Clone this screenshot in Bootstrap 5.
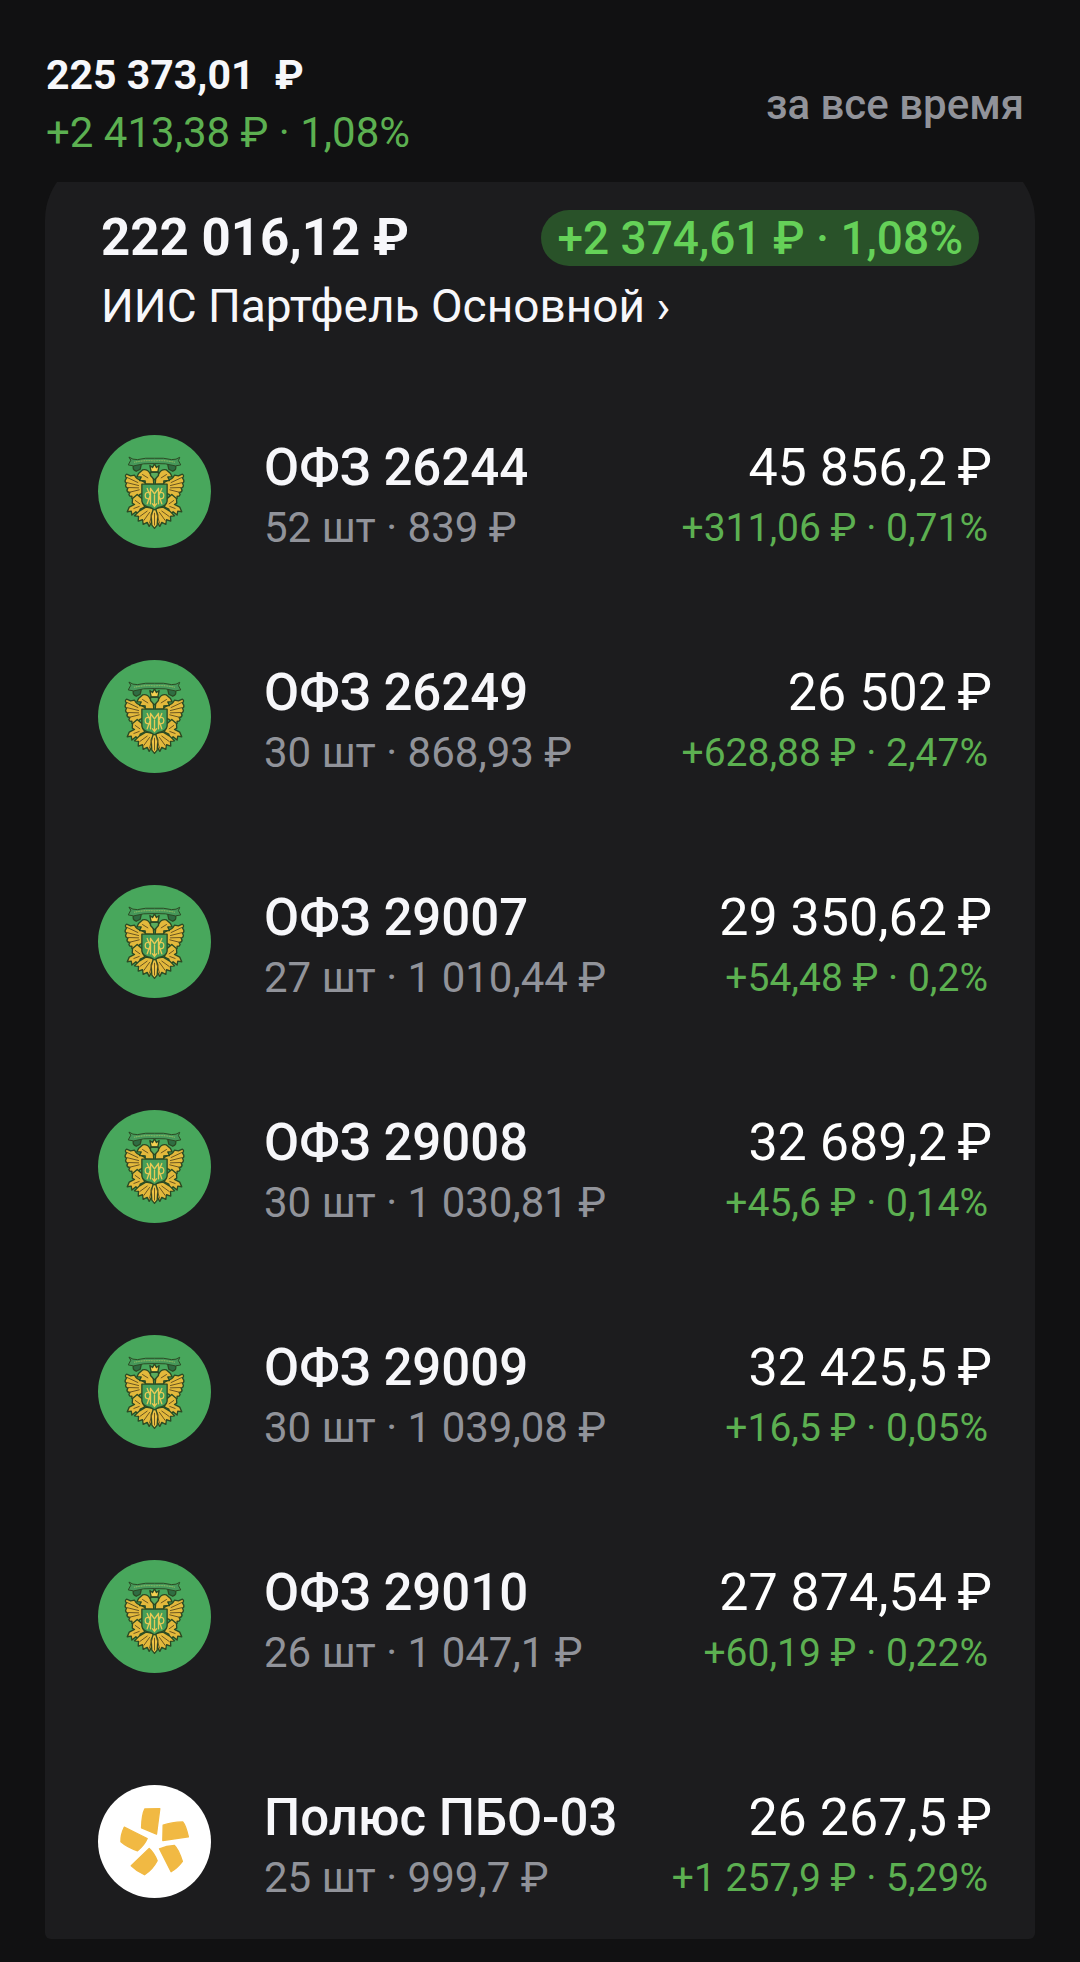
<!DOCTYPE html>
<html lang="ru" data-bs-theme="dark">
<head>
<meta charset="utf-8">
<meta name="viewport" content="width=device-width, initial-scale=1">
<title>Портфель</title>
<link href="https://cdn.jsdelivr.net/npm/bootstrap@5.3.0/dist/css/bootstrap.min.css" rel="stylesheet">
<style>
  body { background: #111112; color: #f7f7fa; font-family: Roboto, "Noto Sans", sans-serif; }
  .summary { padding: 47px 56px 21px 46px; }
  .summary-line { font-size: 42px; line-height: 57px; }
  .summary-total { font-size: 41px; line-height: 57px; }
  .gain { color: #5cb051; }
  .muted { color: #91939a; }
  .period { font-size: 42px; line-height: 57px; font-weight: 500; color: #91939a; }
  .period:hover { color: #b4b6bc; }
  .sheet-clip { margin: 0 45px 23px; border-radius: 0 0 6px 6px; }
  .sheet { margin-top: -28px; padding: 50px 43px 38px 53px; border-radius: 66px 66px 0 0; background: #1c1c1e; }
  .account { padding: 0 13px 0 3px; margin-bottom: 91px; }
  .account-sum { font-size: 51px; line-height: 68px; font-weight: 700; }
  .account-gain { padding: 0 16px; font-size: 46px; line-height: 56px; font-weight: 500; background: #295229; color: #65d158; }
  .account-link { font-size: 46px; line-height: 68px; color: inherit; }
  .holdings { gap: 105px; }
  .holding { gap: 53px; }
  .logo { width: 113px; height: 113px; }
  .holding-name { font-size: 51px; line-height: 74px; font-weight: 500; }
  .holding-sum { font-size: 52px; line-height: 74px; color: #fff; }
  .holding-qty { font-size: 42px; line-height: 46px; }
  .holding-gain { padding-right: 4px; font-size: 39px; line-height: 46px; }
</style>
<script src="https://cdn.jsdelivr.net/npm/bootstrap@5.3.0/dist/js/bootstrap.bundle.min.js" defer></script>
</head>
<body>

<svg class="d-none" aria-hidden="true">
  <symbol id="minfin" viewBox="24 29 340 340">
    <circle cx="194" cy="199" r="170" fill="#48a75c"/>
    <g stroke="#2b4a24" stroke-width="4" stroke-linejoin="round" stroke-linecap="round">
      <!-- one wing, leg and head; the other side is its mirror -->
      <g id="eagle-half" fill="#e3b93c">
        <path d="M172 176 L152 164 Q140 162 134 150 L122 152 L110 147 Q103 152 110 158 L106 165 Q104 171 110 174 L107 180 Q107 187 114 189 L111 195 Q112 202 120 202 L117 208 Q119 215 126 213 L126 220 Q133 224 141 216 L150 208 L160 204 Z"/>
        <path d="M142 208 L128 220 L127 234 L134 238 L118 246 L112 260 L124 258 L126 270 L138 260 L147 266 L151 252 L164 246 L160 224 Z"/>
        <path d="M168 246 L148 258 L134 272 L146 274 L145 288 L158 284 L160 298 L172 292 L178 304 L192 280 L190 250 Z"/>
        <path d="M192 178 L190 156 L180 144 Q172 130 158 134 L146 145 L141 155 L154 155 L149 166 L166 167 L166 176 Z"/>
      </g>
      <use href="#eagle-half" transform="translate(388 0) scale(-1 1)"/>
      <path d="M194 244 L184 270 L186 300 L194 310 L202 300 L204 270 Z" fill="#eec445"/>
      <path d="M156 177 H232 V228 Q230 243 207 247 L194 254 L181 247 Q158 243 156 228 Z" fill="#479f58"/>
      <path d="M180 121 L184 140 H204 L208 121 L200 127 L194 116 L188 127 Z" fill="#f4d050"/>
      <path d="M182 141 H206 V151 L194 164 L182 151 Z" fill="#5aac5d"/>
      <path d="M131 120 Q126 133 139 138 L151 132 L154 118 M257 120 Q262 133 249 138 L237 132 L234 118" fill="#2f6d42"/>
      <path d="M118 96 Q128 104 143 103 Q166 97 194 99 Q222 97 245 103 Q260 104 270 96 L266 106 L273 119 L257 122 Q228 113 194 115 Q160 113 131 122 L115 119 L122 106 Z" fill="#46985a" stroke-width="3"/>
    </g>
    <g fill="none" stroke="#e9ca55" stroke-width="4" stroke-linecap="round">
      <path d="M172 190 L181 211 L172 236 M216 190 L207 211 L216 236 M182 190 V236 M206 190 V236 M182 190 L194 206 L206 190 M194 206 V244 M188 236 L194 244 L200 236"/>
      <path d="M180 202 Q166 199 166 211 T180 221 M208 202 Q222 199 222 211 T208 221"/>
    </g>
    <g fill="none" stroke="#6b5520" stroke-width="3" stroke-linecap="round">
      <path d="M112 157 L144 172 M110 172 L146 181 M113 187 L146 188 M120 201 L148 194 M276 157 L244 172 M278 172 L242 181 M275 187 L242 188 M268 201 L240 194"/>
      <path d="M136 226 L150 236 M132 250 L148 244 M252 226 L238 236 M256 250 L240 244 M150 274 L172 258 M162 286 L179 262 M179 294 L187 266 M194 300 V264 M238 274 L216 258 M226 286 L209 262 M209 294 L201 266 M158 148 L174 158 M230 148 L214 158"/>
    </g>
    <path d="M133 111 Q166 104 194 107 Q222 104 255 111" fill="none" stroke="#a9c863" stroke-width="3" stroke-dasharray="3 2"/>
  </symbol>
  <symbol id="polus" viewBox="24 29 340 340">
    <circle cx="194" cy="199" r="170" fill="#fff"/>
    <g fill="#f1b943" stroke="#f1b943" stroke-width="4" stroke-linejoin="round">
      <path d="M165 101 L210 100 L200 177 L155 158 Q156 118 165 101 Z"/>
      <path d="M220 150 Q245 141 279 140 Q288 150 296 185 L219 196 Z"/>
      <path d="M209 221 Q230 212 254 211 Q266 222 278 259 Q262 280 244 290 Z"/>
      <path d="M178 220 Q193 233 202 257 Q188 284 164 299 Q141 289 124 272 Z"/>
      <path d="M103 156 L172 190 Q164 209 143 227 Q112 217 93 200 Q92 179 103 156 Z"/>
    </g>
  </symbol>
</svg>

<header class="summary d-flex justify-content-between align-items-center">
  <div>
    <div class="summary-total fw-bold">225 373,01&nbsp; ₽</div>
    <div class="summary-line gain">+2 413,38 ₽ · 1,08%</div>
  </div>
  <button type="button" class="btn period border-0 p-0">за все время</button>
</header>

<main class="sheet-clip overflow-hidden">
  <div class="sheet">
    <div class="account">
      <div class="d-flex justify-content-between align-items-center">
        <div class="account-sum">222 016,12 ₽</div>
        <div class="account-gain rounded-pill">+2 374,61 ₽ · 1,08%</div>
      </div>
      <a href="#" class="account-link d-block text-decoration-none">ИИС Партфель Основной ›</a>
    </div>

    <ul class="holdings list-unstyled d-flex flex-column mb-0 text-nowrap">
      <li class="holding d-flex align-items-center">
        <svg class="logo flex-shrink-0" aria-hidden="true"><use href="#minfin"/></svg>
        <div class="flex-grow-1"><div class="holding-name">ОФЗ 26244</div><div class="holding-qty muted">52 шт · 839 ₽</div></div>
        <div class="text-end"><div class="holding-sum">45 856,2&#8201;₽</div><div class="holding-gain gain">+311,06 ₽ · 0,71%</div></div>
      </li>
      <li class="holding d-flex align-items-center">
        <svg class="logo flex-shrink-0" aria-hidden="true"><use href="#minfin"/></svg>
        <div class="flex-grow-1"><div class="holding-name">ОФЗ 26249</div><div class="holding-qty muted">30 шт · 868,93 ₽</div></div>
        <div class="text-end"><div class="holding-sum">26 502&#8201;₽</div><div class="holding-gain gain">+628,88 ₽ · 2,47%</div></div>
      </li>
      <li class="holding d-flex align-items-center">
        <svg class="logo flex-shrink-0" aria-hidden="true"><use href="#minfin"/></svg>
        <div class="flex-grow-1"><div class="holding-name">ОФЗ 29007</div><div class="holding-qty muted">27 шт · 1 010,44 ₽</div></div>
        <div class="text-end"><div class="holding-sum">29 350,62&#8201;₽</div><div class="holding-gain gain">+54,48 ₽ · 0,2%</div></div>
      </li>
      <li class="holding d-flex align-items-center">
        <svg class="logo flex-shrink-0" aria-hidden="true"><use href="#minfin"/></svg>
        <div class="flex-grow-1"><div class="holding-name">ОФЗ 29008</div><div class="holding-qty muted">30 шт · 1 030,81 ₽</div></div>
        <div class="text-end"><div class="holding-sum">32 689,2&#8201;₽</div><div class="holding-gain gain">+45,6 ₽ · 0,14%</div></div>
      </li>
      <li class="holding d-flex align-items-center">
        <svg class="logo flex-shrink-0" aria-hidden="true"><use href="#minfin"/></svg>
        <div class="flex-grow-1"><div class="holding-name">ОФЗ 29009</div><div class="holding-qty muted">30 шт · 1 039,08 ₽</div></div>
        <div class="text-end"><div class="holding-sum">32 425,5&#8201;₽</div><div class="holding-gain gain">+16,5 ₽ · 0,05%</div></div>
      </li>
      <li class="holding d-flex align-items-center">
        <svg class="logo flex-shrink-0" aria-hidden="true"><use href="#minfin"/></svg>
        <div class="flex-grow-1"><div class="holding-name">ОФЗ 29010</div><div class="holding-qty muted">26 шт · 1 047,1 ₽</div></div>
        <div class="text-end"><div class="holding-sum">27 874,54&#8201;₽</div><div class="holding-gain gain">+60,19 ₽ · 0,22%</div></div>
      </li>
      <li class="holding d-flex align-items-center">
        <svg class="logo flex-shrink-0" aria-hidden="true"><use href="#polus"/></svg>
        <div class="flex-grow-1"><div class="holding-name">Полюс ПБО-03</div><div class="holding-qty muted">25 шт · 999,7 ₽</div></div>
        <div class="text-end"><div class="holding-sum">26 267,5&#8201;₽</div><div class="holding-gain gain">+1 257,9 ₽ · 5,29%</div></div>
      </li>
    </ul>
  </div>
</main>

</body>
</html>
